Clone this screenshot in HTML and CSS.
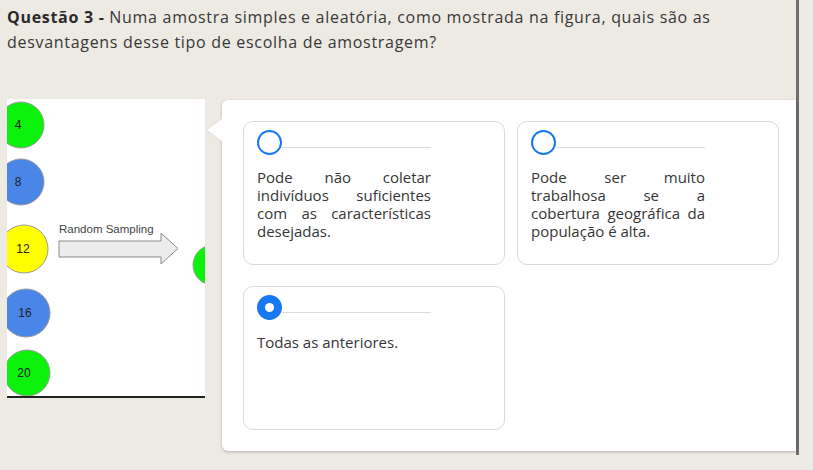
FILE: index.html
```html
<!DOCTYPE html>
<html lang="pt-BR">
<head>
<meta charset="utf-8">
<title>Questão 3</title>
<link rel="stylesheet" href="styles.css">
</head>
<body>
<div class="frame">
  <p class="question"><strong>Questão 3 -</strong> Numa amostra simples e aleatória, como mostrada na figura, quais são as desvantagens desse tipo de escolha de amostragem?</p>
  <div class="content">
    <div class="figure">
      <svg width="198" height="297" viewBox="0 0 198 297" xmlns="http://www.w3.org/2000/svg">
        <g stroke="#9a9a9a" stroke-width="1">
          <circle cx="14" cy="26" r="23" fill="#0cf20c"/>
          <circle cx="14" cy="83" r="23" fill="#4a86e8"/>
          <circle cx="17" cy="150" r="24" fill="#ffff00"/>
          <circle cx="19" cy="214" r="24" fill="#4a86e8"/>
          <circle cx="20" cy="274" r="23" fill="#0cf20c"/>
          <circle cx="206" cy="166" r="20" fill="#0cf20c"/>
        </g>
        <g fill="#222" font-family="Liberation Sans, Arial, sans-serif" font-size="12" text-anchor="middle">
          <text x="11" y="30">4</text>
          <text x="11" y="87">8</text>
          <text x="16" y="154">12</text>
          <text x="18" y="218">16</text>
          <text x="17" y="278">20</text>
        </g>
        <text x="52" y="134" fill="#444" font-family="Liberation Sans, Arial, sans-serif" font-size="11.5">Random Sampling</text>
        <polygon points="52,142 154,142 154,134 171,149.5 154,165 154,158 52,158" fill="#ececec" stroke="#8a8a8a" stroke-width="1"/>
      </svg>
    </div>
    <div class="panel">
      <div class="options">
        <div class="card">
          <div class="radio-row"><span class="radio"></span><span class="rule"></span></div>
          <p class="answer">Pode não coletar indivíduos suficientes com as características desejadas.</p>
        </div>
        <div class="card">
          <div class="radio-row"><span class="radio"></span><span class="rule"></span></div>
          <p class="answer">Pode ser muito trabalhosa se a cobertura geográfica da população é alta.</p>
        </div>
        <div class="card">
          <div class="radio-row"><span class="radio radio-on"></span><span class="rule"></span></div>
          <p class="answer">Todas as anteriores.</p>
        </div>
      </div>
    </div>
  </div>
</div>
</body>
</html>
```
FILE: styles.css
```css
* { box-sizing: border-box; }
html, body { margin: 0; padding: 0; }
body {
  background: #ede9e3;
  font-family: "Open Sans", "Noto Sans", sans-serif;
  color: #333;
}
.frame {
  width: 799px;
  height: 455px;
  border-right: 3px solid #6e6e6e;
  padding-left: 7px;
}
.question {
  margin: 0;
  padding-top: 5px;
  width: 745px;
  font-size: 16px;
  line-height: 25px;
  letter-spacing: 0.7px;
  color: #383838;
}
.question strong {
  font-weight: 700;
  color: #2a2a2a;
}
.content {
  display: flex;
  align-items: flex-start;
  margin-top: 44px;
}
.figure {
  width: 198px;
  height: 299px;
  background: #fff;
  border-bottom: 2px solid #222;
  overflow: hidden;
  flex: none;
}
.figure svg { display: block; }
.panel {
  position: relative;
  margin-left: 17px;
  margin-top: 1px;
  width: 574px;
  height: 351px;
  background: #fff;
  border-radius: 6px 0 0 6px;
  box-shadow: 0 1px 3px rgba(0,0,0,0.25);
  padding: 21px 18px 21px 21px;
}
.panel::before {
  content: "";
  position: absolute;
  left: -16px;
  top: 18px;
  width: 0;
  height: 0;
  border-top: 12px solid transparent;
  border-bottom: 12px solid transparent;
  border-right: 16px solid #e2ded8;
}
.panel::after {
  content: "";
  position: absolute;
  left: -15px;
  top: 19px;
  width: 0;
  height: 0;
  border-top: 11px solid transparent;
  border-bottom: 11px solid transparent;
  border-right: 15px solid #fff;
}
.options {
  display: grid;
  grid-template-columns: 262px 262px;
  grid-auto-rows: 144px;
  column-gap: 12px;
  row-gap: 21px;
}
.card {
  border: 1px solid #dadada;
  border-radius: 10px;
  padding: 8px 73px 0 13px;
}
.radio-row {
  display: flex;
  align-items: flex-start;
}
.radio {
  width: 25px;
  height: 25px;
  border-radius: 50%;
  border: 2.5px solid #1877f2;
  flex: none;
  display: flex;
  align-items: center;
  justify-content: center;
}
.radio-on {
  background: #1877f2;
}
.radio-on::after {
  content: "";
  width: 9px;
  height: 9px;
  border-radius: 50%;
  background: #fff;
}
.rule {
  flex: 1;
  height: 1px;
  background: #dcdcdc;
  margin-top: 17px;
}
.answer {
  margin: 13px 0 0;
  font-size: 15px;
  line-height: 18px;
  text-align: justify;
  color: #363636;
}
```
